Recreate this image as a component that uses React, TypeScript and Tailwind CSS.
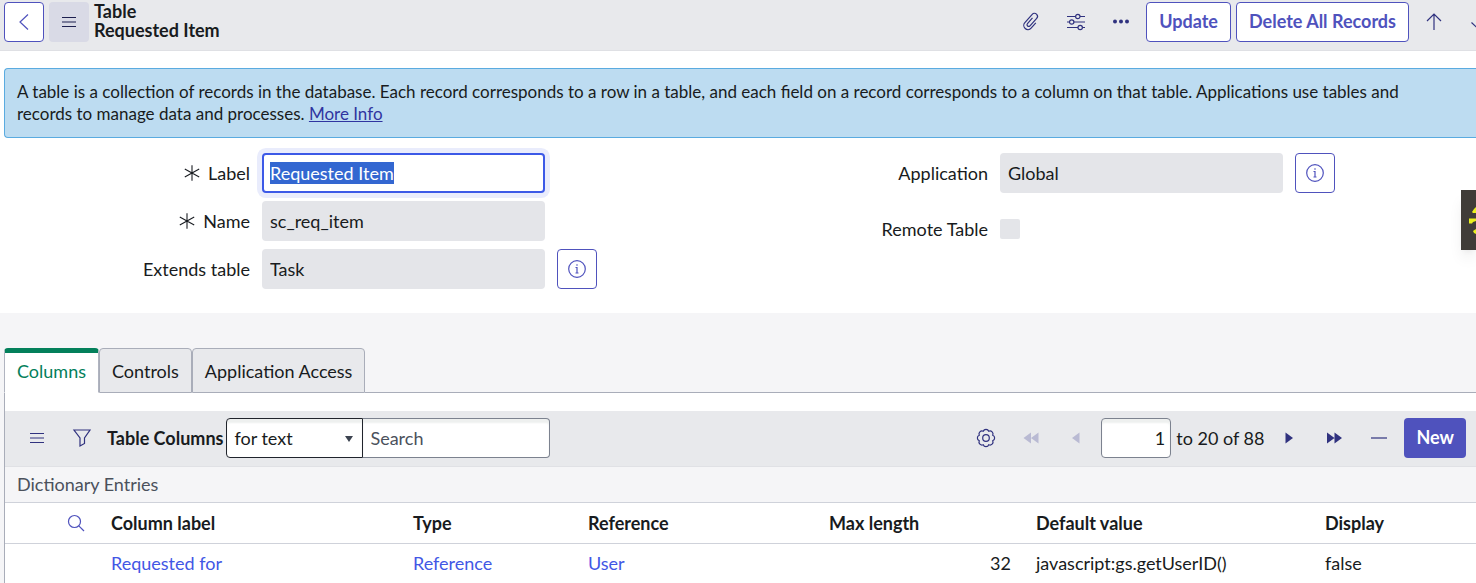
import { useEffect, useRef, useState } from 'react';
import type { ReactNode } from 'react';

const TABS = ['Columns', 'Controls', 'Application Access'];

const ROWS = [
    {
        label: 'Requested for',
        type: 'Reference',
        reference: 'User',
        maxLength: 32,
        defaultValue: 'javascript:gs.getUserID()',
        display: 'false',
    },
];

interface IconProps {
    children: ReactNode;
    size?: number;
}

function Icon({ children, size = 20 }: IconProps) {
    return (
        <svg
            width={size}
            height={size}
            viewBox="0 0 20 20"
            fill="none"
            stroke="currentColor"
            strokeWidth="1.2"
            className="shrink-0"
            aria-hidden="true"
        >
            {children}
        </svg>
    );
}

const MenuIcon = () => (
    <Icon>
        <path d="M3 5.5h14M3 10h14M3 14.5h14" />
    </Icon>
);

const InfoIcon = () => (
    <Icon>
        <circle cx="10" cy="10" r="8.3" />
        <path d="M8.5 8.5H10v5.500M8.500 14h3M10 5.300v1.400" />
    </Icon>
);

const RequiredIcon = () => (
    <Icon size={18}>
        <path d="M10 1.5v17M2 5.500l16 9M18 5.500l-16 9" />
    </Icon>
);

function IconButton({ label, disabled, children }: { label: string; disabled?: boolean; children: ReactNode }) {
    return (
        <button
            type="button"
            aria-label={label}
            disabled={disabled}
            className="flex size-10 shrink-0 items-center justify-center rounded text-[#30327f] disabled:text-[#b9bad3]"
        >
            {children}
        </button>
    );
}

function InfoButton({ label }: { label: string }) {
    return (
        <button
            type="button"
            aria-label={label}
            className="flex size-10 shrink-0 items-center justify-center rounded border border-[#4f52bd] bg-white text-[#4f52bd]"
        >
            <InfoIcon />
        </button>
    );
}

interface FieldProps {
    id: string;
    label: string;
    required?: boolean;
    children: ReactNode;
}

function Field({ id, label, required, children }: FieldProps) {
    return (
        <div className="flex min-h-10 items-center gap-3">
            <label htmlFor={id} className="flex w-[250px] shrink-0 items-center justify-end gap-[7px]">
                {required && <RequiredIcon />}
                {label}
            </label>
            {children}
        </div>
    );
}

function ReadOnlyInput({ id, value }: { id: string; value: string }) {
    return <input id={id} readOnly value={value} className="h-10 w-[283px] rounded bg-[#e4e5e9] px-2 outline-none" />;
}

export default function App() {
    const [activeTab, setActiveTab] = useState('Columns');
    const [label, setLabel] = useState('Requested Item');
    const labelRef = useRef<HTMLInputElement>(null);

    // The label field starts focused with its text selected
    useEffect(() => {
        labelRef.current?.focus();
        labelRef.current?.select();
    }, []);

    return (
        <div className="relative min-h-screen overflow-hidden bg-[#f5f5f7] font-['Lato',sans-serif] text-[18px] leading-[22px] text-[#181b20]">
            {/* Form header */}
            <header className="flex h-[51px] items-start justify-between border-b border-[#dfe0e4] bg-[#e8e9ec] pt-[2px] pl-1">
                <div className="flex gap-[5px]">
                    <button
                        type="button"
                        aria-label="Back"
                        className="flex size-10 items-center justify-center rounded border border-[#4f52bd] bg-white text-[#4f52bd]"
                    >
                        <Icon>
                            <path d="M14 2.5L6 10l8 7.5" />
                        </Icon>
                    </button>
                    <button
                        type="button"
                        aria-label="Additional actions"
                        className="flex size-10 items-center justify-center rounded bg-[#d9dae6] text-[#1d1f4f]"
                    >
                        <MenuIcon />
                    </button>
                    <h1 className="font-bold leading-[19px]">
                        Table
                        <br />
                        Requested Item
                    </h1>
                </div>
                <div className="-mr-[23px] flex shrink-0 gap-[5px]">
                    <IconButton label="Manage attachments">
                        <Icon>
                            <path
                                transform="rotate(42 10 10)"
                                d="M14.200 7.500v7a4.200 4.200 0 0 1-8.400 0V3.500a3 3 0 0 1 6 0v10a1.700 1.700 0 0 1-3.400 0V6"
                            />
                        </Icon>
                    </IconButton>
                    <IconButton label="Personalize form">
                        <Icon>
                            <path d="M1 4.500h8.500M14 4.500h5M1 10h2.500M8 10h11M1 15.500h11M16.500 15.500H19" />
                            <circle cx="11.800" cy="4.500" r="2.200" />
                            <circle cx="5.700" cy="10" r="2.200" />
                            <circle cx="14.200" cy="15.500" r="2.200" />
                        </Icon>
                    </IconButton>
                    <IconButton label="More options">
                        <Icon>
                            <g fill="currentColor" stroke="none">
                                <circle cx="4" cy="9.500" r="2" />
                                <circle cx="10" cy="9.500" r="2" />
                                <circle cx="16" cy="9.500" r="2" />
                            </g>
                        </Icon>
                    </IconButton>
                    <button type="button" className="h-10 rounded border border-[#4f52bd] bg-white px-3 pb-[2px] font-bold text-[#4f52bd]">
                        Update
                    </button>
                    <button type="button" className="h-10 rounded border border-[#4f52bd] bg-white px-3 pb-[2px] font-bold text-[#4f52bd]">
                        Delete All Records
                    </button>
                    <IconButton label="Previous record">
                        <Icon>
                            <path d="M10 18V2.500M3 9l7-7 7 7" />
                        </Icon>
                    </IconButton>
                    <IconButton label="Next record">
                        <Icon>
                            <path d="M10 2v15.500M2.500 10.500l7.500 7 7.500-7" />
                        </Icon>
                    </IconButton>
                </div>
            </header>

            {/* Form body */}
            <main>
                <section className="bg-white pt-[17px] pb-6">
                    <div className="ml-1 rounded-l border border-r-0 border-[#5aabe0] bg-[#bddcf1] py-3 pr-12 pl-3">
                        <p className="text-[17px]">
                            A table is a collection of records in the database. Each record corresponds to a row in a table, and
                            each field on a record corresponds to a column on that table. Applications use tables and records to
                            manage data and processes.{' '}
                            <a href="#more-info" className="text-[#3034a0] underline">
                                More Info
                            </a>
                        </p>
                    </div>

                    <form className="mt-[15px] grid grid-cols-2">
                        <div className="flex flex-col gap-2">
                            <Field id="label" label="Label" required>
                                <input
                                    id="label"
                                    ref={labelRef}
                                    value={label}
                                    onChange={(e) => setLabel(e.target.value)}
                                    className="h-10 w-[283px] rounded border-2 border-[#3c59e7] bg-white px-[6px] outline-none ring-5 ring-[#e9ecfc] selection:bg-[#3367d1] selection:text-white"
                                />
                            </Field>
                            <Field id="name" label="Name" required>
                                <ReadOnlyInput id="name" value="sc_req_item" />
                            </Field>
                            <Field id="extends" label="Extends table">
                                <ReadOnlyInput id="extends" value="Task" />
                                <InfoButton label="Preview extended table" />
                            </Field>
                        </div>
                        <div className="flex flex-col gap-4">
                            <Field id="application" label="Application">
                                <ReadOnlyInput id="application" value="Global" />
                                <InfoButton label="Preview application" />
                            </Field>
                            <Field id="remote" label="Remote Table">
                                <input id="remote" type="checkbox" disabled className="size-5 appearance-none rounded-xs bg-[#e4e5e9]" />
                            </Field>
                        </div>
                    </form>
                </section>

                {/* Related lists */}
                <div role="tablist" className="mt-[35px] flex h-[45px] pl-1">
                    {TABS.map((tab) => (
                        <button
                            key={tab}
                            type="button"
                            role="tab"
                            aria-selected={tab === activeTab}
                            onClick={() => setActiveTab(tab)}
                            className={`rounded-t border px-3 ${
                                tab === activeTab
                                    ? 'border-x-[#b0b4c0] border-t-5 border-t-[#04805b] border-b-white bg-white pb-1 text-[#04805b]'
                                    : 'border-[#a9adb9] bg-[#e8e9ec]'
                            }`}
                        >
                            {tab}
                        </button>
                    ))}
                    <div className="flex-1 border-b border-[#a9adb9]" />
                </div>

                <section className="ml-1 border-l border-[#a9adb9] bg-white pt-[18px]">
                    <div className="flex h-14 items-start justify-between border-b border-[#e0e1e5] bg-[#e8e9ec] pt-[7px] pr-[10px] pl-3">
                        <div className="flex items-center gap-[5px]">
                            <IconButton label="List controls">
                                <MenuIcon />
                            </IconButton>
                            <IconButton label="Show filter">
                                <Icon>
                                    <path d="M2 2h16l-5.500 8v5.500L8 18v-8z" />
                                </Icon>
                            </IconButton>
                            <div className="flex items-center gap-[3px]">
                                <h2 className="font-bold">Table Columns</h2>
                                <div className="flex">
                                    <div className="relative">
                                        <select
                                            aria-label="Search field"
                                            className="h-10 w-[137px] appearance-none rounded-l border border-[#20242c] bg-white pl-[7px] inset-shadow-[0_4px_2px_#eef0ef]"
                                        >
                                            <option>for text</option>
                                        </select>
                                        <svg
                                            width="8"
                                            height="6"
                                            viewBox="0 0 8 6"
                                            className="pointer-events-none absolute top-[18px] right-[10px] text-[#3c4350]"
                                            aria-hidden="true"
                                        >
                                            <path d="M0 0h8L4 6z" fill="currentColor" />
                                        </svg>
                                    </div>
                                    <input
                                        type="search"
                                        aria-label="Search"
                                        placeholder="Search"
                                        className="h-10 w-[187px] rounded-r border border-l-0 border-[#7c828f] bg-white px-[7px] inset-shadow-[0_4px_2px_#eef0ef] placeholder:text-[#4b515c]"
                                    />
                                </div>
                            </div>
                        </div>
                        <div className="flex items-center gap-[5px]">
                            <IconButton label="Personalize list">
                                <Icon>
                                    <circle cx="10" cy="10" r="3.300" />
                                    <path d="M16.740 12.790A3 3 0 0 1 12.790 16.740A3 3 0 0 1 7.210 16.740A3 3 0 0 1 3.260 12.790A3 3 0 0 1 3.260 7.210A3 3 0 0 1 7.210 3.260A3 3 0 0 1 12.790 3.260A3 3 0 0 1 16.740 7.210A3 3 0 0 1 16.740 12.790z" />
                                </Icon>
                            </IconButton>
                            <IconButton label="First page" disabled>
                                <Icon>
                                    <path d="M10 4.500v11L2.500 10zM17.500 4.500v11L10 10z" fill="currentColor" stroke="none" />
                                </Icon>
                            </IconButton>
                            <IconButton label="Previous page" disabled>
                                <Icon>
                                    <path d="M13.500 4.500v11L6 10z" fill="currentColor" stroke="none" />
                                </Icon>
                            </IconButton>
                            <input
                                aria-label="Skip to row"
                                defaultValue="1"
                                className="h-10 w-[70px] rounded border border-[#7c828f] bg-white px-[5px] text-right inset-shadow-[0_4px_2px_#eef0ef]"
                            />
                            <span>to 20 of 88</span>
                            <IconButton label="Next page">
                                <Icon>
                                    <path d="M6.500 4.500v11L14 10z" fill="currentColor" stroke="none" />
                                </Icon>
                            </IconButton>
                            <IconButton label="Last page">
                                <Icon>
                                    <path d="M3 4.500v11l7.500-5.500zM10.500 4.500v11L18 10z" fill="currentColor" stroke="none" />
                                </Icon>
                            </IconButton>
                            <IconButton label="Collapse list">
                                <Icon>
                                    <path d="M2 10h16" />
                                </Icon>
                            </IconButton>
                            <button type="button" className="h-10 rounded bg-[#4f52bd] px-3 pb-[2px] font-bold text-white">
                                New
                            </button>
                        </div>
                    </div>

                    <p className="border-b border-[#cfd2da] bg-[#f5f5f7] px-3 pt-[6px] pb-[7px] text-[#4b515c]">Dictionary Entries</p>

                    <table className="w-full table-fixed border-collapse text-left">
                        <colgroup>
                            <col className="w-[106px]" />
                            <col className="w-[302px]" />
                            <col className="w-[175px]" />
                            <col className="w-[241px]" />
                            <col className="w-[207px]" />
                            <col className="w-[289px]" />
                            <col />
                        </colgroup>
                        <thead>
                            <tr className="h-10 border-b border-[#cfd2da]">
                                <th className="pl-[51px]">
                                    <button type="button" aria-label="Search columns" className="flex h-8 w-10 items-center justify-center text-[#4f52bd]">
                                        <Icon>
                                            <circle cx="8.500" cy="8.500" r="6" />
                                            <path d="M12.800 12.800l5.200 5.200" />
                                        </Icon>
                                    </button>
                                </th>
                                <th>Column label</th>
                                <th>Type</th>
                                <th>Reference</th>
                                <th>Max length</th>
                                <th>Default value</th>
                                <th>Display</th>
                            </tr>
                        </thead>
                        <tbody>
                            {ROWS.map((row) => (
                                <tr key={row.label} className="h-10 border-b border-[#e4e5e9]">
                                    <td />
                                    <td>
                                        <a href="#column" className="text-[#4257e5]">
                                            {row.label}
                                        </a>
                                    </td>
                                    <td>
                                        <a href="#type" className="text-[#4257e5]">
                                            {row.type}
                                        </a>
                                    </td>
                                    <td>
                                        <a href="#reference" className="text-[#4257e5]">
                                            {row.reference}
                                        </a>
                                    </td>
                                    <td className="pr-[25px] text-right">{row.maxLength}</td>
                                    <td>{row.defaultValue}</td>
                                    <td>{row.display}</td>
                                </tr>
                            ))}
                        </tbody>
                    </table>
                </section>
            </main>

            {/* Docked widget handle */}
            <button
                type="button"
                aria-label="Open widget"
                className="absolute top-[190px] right-0 h-[60px] w-[15px] overflow-hidden bg-[#403c38] shadow-lg"
            >
                <svg width="15" height="60" viewBox="0 0 15 60" fill="#e9f01d" aria-hidden="true">
                    <path d="M11 22l2-3 2-2v6h-3zM8 28.500h7v2.500l-3 1-1 1.500H8zM12 41l3-2v5l-2-1z" />
                </svg>
            </button>
        </div>
    );
}
